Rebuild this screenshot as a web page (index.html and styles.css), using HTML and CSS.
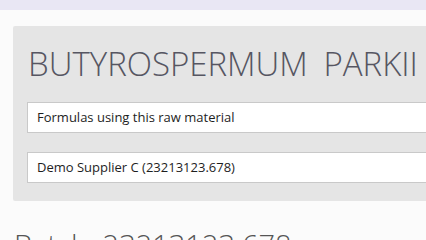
FILE: index.html
```html
<!DOCTYPE html>
<html>
<head>
<meta charset="utf-8">
<link rel="stylesheet" href="styles.css">
</head>
<body>
<div class="topbar"></div>
<main class="content">
  <section class="panel">
    <h1 class="title">BUTYROSPERMUM PARKII</h1>
    <div class="field">Formulas using this raw material</div>
    <div class="field">Demo Supplier C (23213123.678)</div>
  </section>
  <h2 class="batch">Batch: 23213123.678</h2>
</main>
</body>
</html>
```
FILE: styles.css
```css
html, body {
  margin: 0;
  padding: 0;
  background: #fbfbfb;
  font-family: "Open Sans", "Liberation Sans", sans-serif;
  overflow: hidden;
}
.topbar {
  height: 10px;
  background: #e9e7f4;
}
.content {
  padding: 16px 0 0 13px;
}
.panel {
  background: #e5e5e5;
  padding: 13px 0 18px 14px;
  border-radius: 2px 0 0 2px;
}
.title {
  margin: 0 0 13px 1px;
  font-weight: 300;
  font-size: 33px;
  line-height: 50px;
  color: #565662;
  word-spacing: 7px;
  white-space: nowrap;
}
.field {
  background: #fff;
  border: 1px solid #c9c9c9;
  border-right: none;
  height: 29px;
  line-height: 29px;
  padding-left: 9px;
  font-size: 13px;
  color: #1e1e1e;
  margin-bottom: 19px;
}
.field:last-child {
  margin-bottom: 0;
}
.batch {
  margin: 24px 0 0 1px;
  font-weight: 300;
  font-size: 29px;
  line-height: 40px;
  color: #555;
  white-space: nowrap;
}
```
